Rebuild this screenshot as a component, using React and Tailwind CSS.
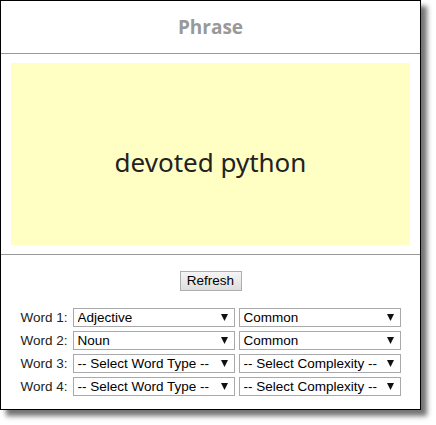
import React, { useState } from "react";

const typeOptions = ["-- Select Word Type --", "Adjective", "Noun", "Verb", "Adverb"];
const complexityOptions = ["-- Select Complexity --", "Common", "Uncommon", "Rare"];
const arial = { fontFamily: '"Liberation Sans", Arial, sans-serif' };

function Dropdown({ value, options, onChange }) {
  return (
    <div className="relative w-[162px] h-[19px] shrink-0">
      <select
        value={value}
        onChange={(e) => onChange(e.target.value)}
        className="block appearance-none w-full h-[19px] border border-[#a9a9a9] bg-white pl-[4px] pr-5 py-0 text-[13.5px] leading-[17px] text-black outline-none"
        style={arial}
      >
        {options.map((o) => <option key={o} value={o}>{o}</option>)}
      </select>
      <svg className="pointer-events-none absolute right-[7px] top-[6px]" width="7" height="7" viewBox="0 0 7 7">
        <polygon points="0,0 7,0 3.5,7" fill="#111" />
      </svg>
    </div>
  );
}

export default function App() {
  const [words, setWords] = useState([
    { type: "Adjective", complexity: "Common" },
    { type: "Noun", complexity: "Common" },
    { type: "-- Select Word Type --", complexity: "-- Select Complexity --" },
    { type: "-- Select Word Type --", complexity: "-- Select Complexity --" },
  ]);
  const update = (i, key, v) => setWords(words.map((w, j) => (j === i ? { ...w, [key]: v } : w)));

  return (
    <div className="w-[436px] h-[425px] bg-white">
      <div className="w-[421px] h-[410px] border border-black bg-white shadow-[6px_6px_5px_rgba(0,0,0,0.55)] flex flex-col">
        <div className="h-[53px] shrink-0 border-b border-[#999] flex items-center justify-center">
          <h1 className="text-[19px] font-bold text-[#999]" style={{ fontFamily: '"Open Sans", sans-serif' }}>Phrase</h1>
        </div>
        <div className="shrink-0 px-[10px] py-[9px] border-b border-[#999]">
          <div className="h-[182px] bg-[#ffffc4] flex items-center justify-center pt-[16px]">
            <span className="text-[26px] text-[#222] leading-none" style={{ fontFamily: '"Noto Sans", sans-serif' }}>devoted python</span>
          </div>
        </div>
        <div className="flex flex-col items-center pt-[16px]" style={arial}>
          <button className="w-[62px] h-[20px] border border-[#adadad] bg-gradient-to-b from-[#f5f5f5] to-[#dedede] text-[13.5px] leading-[18px] text-black">Refresh</button>
          <div className="mt-[17px] flex flex-col gap-[4px]">
            {words.map((w, i) => (
              <div key={i} className="flex items-center h-[19px] gap-[4px]">
                <span className="text-[13.5px] leading-[19px] text-[#222] w-[48px] text-right pr-[1px] whitespace-nowrap">Word {i + 1}:</span>
                <Dropdown value={w.type} options={typeOptions} onChange={(v) => update(i, "type", v)} />
                <Dropdown value={w.complexity} options={complexityOptions} onChange={(v) => update(i, "complexity", v)} />
              </div>
            ))}
          </div>
        </div>
      </div>
    </div>
  );
}
